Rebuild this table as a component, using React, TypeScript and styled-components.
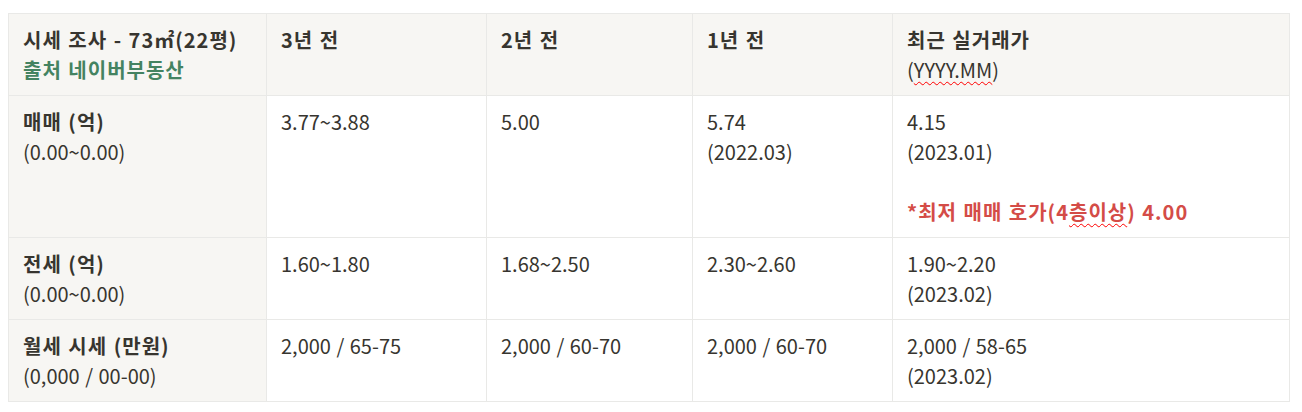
import React from "react";
import styled, { createGlobalStyle } from "styled-components";

const GlobalStyle = createGlobalStyle`
  body {
    margin: 0;
    background: #ffffff;
    font-family: "Noto Sans CJK KR", "Noto Sans", sans-serif;
    color: #37352f;
  }
`;

const Page = styled.div`
  padding: 13px 0 0 8px;
`;

const Table = styled.table`
  border-collapse: collapse;
  table-layout: fixed;
  width: 1281px;
  font-size: 20px;
  line-height: 30px;
  word-spacing: 1px;
`;

const Col = styled.col<{ $w: number }>`
  width: ${(p) => p.$w}px;
`;

const Cell = styled.td<{ $head?: boolean }>`
  border: 1px solid #e9e9e7;
  padding: 11px 14px 10px;
  vertical-align: top;
  text-align: left;
  background: ${(p) => (p.$head ? "#f7f6f3" : "#ffffff")};
  font-weight: 400;
`;

const Bold = styled.span`
  font-weight: 700;
  letter-spacing: 1px;
`;

const Tint = styled.span<{ $tone: "green" | "red" }>`
  font-weight: 700;
  letter-spacing: 1px;
  color: ${(p) => (p.$tone === "green" ? "#448361" : "#d44c47")};
`;

const Spell = styled.span`
  text-decoration: underline wavy #ff0000;
  text-decoration-thickness: 1px;
  text-underline-offset: 3px;
`;

const Line = styled.div`
  height: 30px;
  white-space: nowrap;
`;

const widths = [258, 220, 206, 200, 397];

type Row = { label: string; note: string; values: string[][] };

const rows: Row[] = [
  {
    label: "매매 (억)",
    note: "(0.00~0.00)",
    values: [["3.77~3.88"], ["5.00"], ["5.74", "(2022.03)"], ["4.15", "(2023.01)"]],
  },
  {
    label: "전세 (억)",
    note: "(0.00~0.00)",
    values: [["1.60~1.80"], ["1.68~2.50"], ["2.30~2.60"], ["1.90~2.20", "(2023.02)"]],
  },
  {
    label: "월세 시세 (만원)",
    note: "(0,000 / 00-00)",
    values: [["2,000 / 65-75"], ["2,000 / 60-70"], ["2,000 / 60-70"], ["2,000 / 58-65", "(2023.02)"]],
  },
];

export default function App() {
  return (
    <Page>
      <GlobalStyle />
      <Table>
        <colgroup>
          {widths.map((w, i) => (
            <Col key={i} $w={w} />
          ))}
        </colgroup>
        <tbody>
          <tr>
            <Cell as="th" $head>
              <Line>
                <Bold>시세 조사 - 73㎡(22평)</Bold>
              </Line>
              <Line>
                <Tint $tone="green">출처 네이버부동산</Tint>
              </Line>
            </Cell>
            <Cell as="th" $head>
              <Bold>3년 전</Bold>
            </Cell>
            <Cell as="th" $head>
              <Bold>2년 전</Bold>
            </Cell>
            <Cell as="th" $head>
              <Bold>1년 전</Bold>
            </Cell>
            <Cell as="th" $head>
              <Line>
                <Bold>최근 실거래가</Bold>
              </Line>
              <Line>
                (<Spell>YYYY.MM</Spell>)
              </Line>
            </Cell>
          </tr>
          {rows.map((row, ri) => (
            <tr key={row.label}>
              <Cell $head>
                <Line>
                  <Bold>{row.label}</Bold>
                </Line>
                <Line>{row.note}</Line>
              </Cell>
              {row.values.map((lines, ci) => (
                <Cell key={ci}>
                  {lines.map((l) => (
                    <Line key={l}>{l}</Line>
                  ))}
                  {ri === 0 && ci === 3 && (
                    <>
                      <Line />
                      <Line>
                        <Tint $tone="red">
                          *최저 매매 호가(4<Spell>층이상</Spell>) 4.00
                        </Tint>
                      </Line>
                    </>
                  )}
                </Cell>
              ))}
            </tr>
          ))}
        </tbody>
      </Table>
    </Page>
  );
}
